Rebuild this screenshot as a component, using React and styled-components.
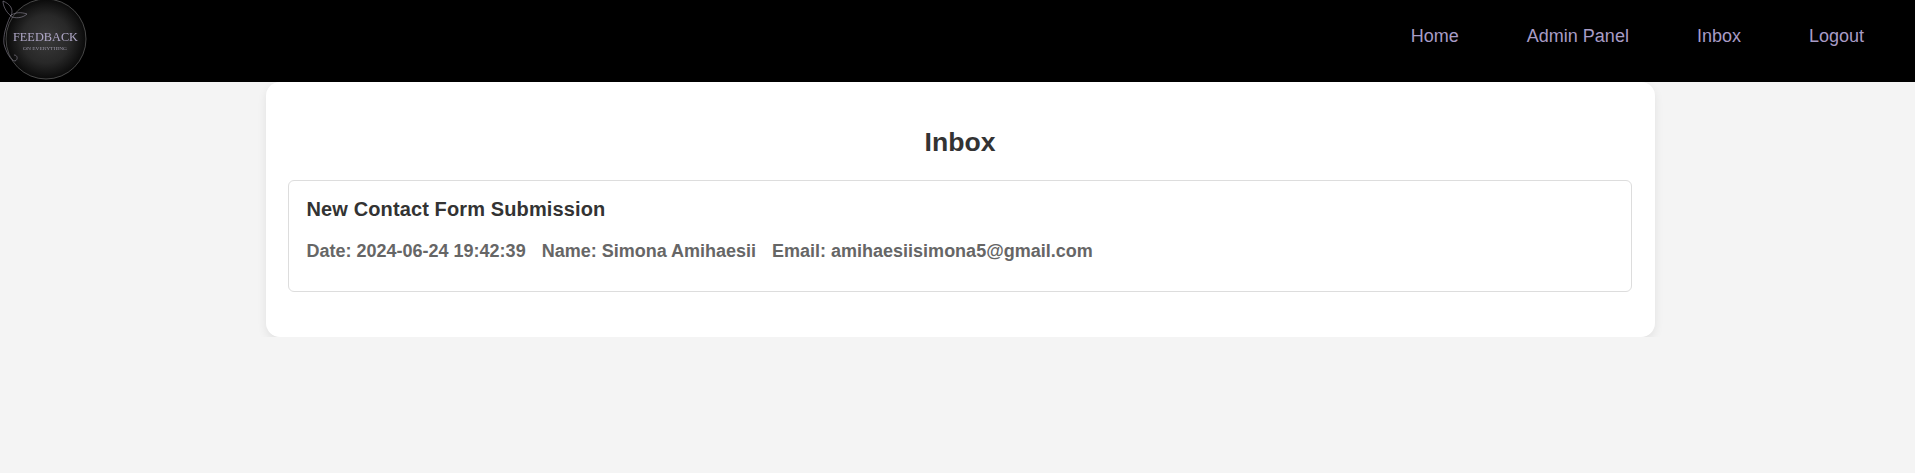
import React from 'react';
import styled, { createGlobalStyle } from 'styled-components';

const GlobalStyle = createGlobalStyle`
  html, body {
    margin: 0;
    padding: 0;
    background: #f4f4f4;
    font-family: "Liberation Sans", Arial, sans-serif;
  }
`;

const Header = styled.header`
  display: flex;
  justify-content: space-between;
  align-items: center;
  height: 82px;
  background: #000;
  overflow: hidden;
`;

const LogoMark = styled.svg`
  display: block;
  width: 90px;
  height: 82px;
  filter: blur(0.3px);
`;

const Nav = styled.nav`
  display: flex;
  gap: 68px;
  padding: 0 51px 9px 0;
`;

const NavLink = styled.a`
  color: #a89cc6;
  font-size: 18px;
  text-decoration: none;
`;

const Card = styled.main`
  box-sizing: border-box;
  width: 1389px;
  margin: 0 0 0 266px;
  padding: 23px 23px 45px 22px;
  background: #fff;
  border-radius: 14px;
  box-shadow: 0 4px 10px rgba(0, 0, 0, 0.08);
`;

const Title = styled.h1`
  margin: 21px 0 22px;
  color: #333;
  font-size: 26.6px;
  line-height: 32px;
  text-align: center;
`;

const Message = styled.article`
  box-sizing: border-box;
  height: 112px;
  padding: 17px 17px 17px 17.5px;
  border: 1px solid #ddd;
  border-radius: 6px;
`;

const Subject = styled.h2`
  margin: 0 0 21px;
  color: #333;
  font-size: 20px;
  line-height: 22px;
  letter-spacing: 0.12px;
`;

const Meta = styled.p`
  display: flex;
  gap: 16px;
  margin: 0;
  color: #666;
  font-size: 18px;
  font-weight: bold;
  line-height: 20px;
`;

const Logo = () => (
  <LogoMark viewBox="0 0 90 82">
    <defs>
      <radialGradient id="disc" cx="50%" cy="50%" r="50%">
        <stop offset="0%" stopColor="#3a3a3a" />
        <stop offset="60%" stopColor="#282828" />
        <stop offset="100%" stopColor="#0a0a0a" />
      </radialGradient>
    </defs>
    <circle cx="46" cy="39" r="40" fill="url(#disc)" stroke="#8a8a8a" strokeWidth="0.5" />
    <g fill="none" stroke="#8f8a98" strokeWidth="0.6">
      <path d="M3 1 C10 4 14 9 11 16 C6 12 3 6 3 1 Z" />
      <path d="M10 16 C15 12 21 12 27 14 C23 18 15 19 10 16 Z" />
      <path d="M10 17 C6 26 3 36 4 44 C6 52 11 61 15 61 C18 60 18 55 14 55" />
    </g>
    <text x="45.5" y="41" fill="#b0a8c8" fontFamily="Liberation Serif" fontSize="13.5" textAnchor="middle" textLength="65" lengthAdjust="spacingAndGlyphs">FEEDBACK</text>
    <text x="45" y="50" fill="#9a96a6" fontFamily="Liberation Serif" fontSize="5" textAnchor="middle" textLength="44" lengthAdjust="spacingAndGlyphs">ON EVERYTHING</text>
  </LogoMark>
);

const App = () => (
  <>
    <GlobalStyle />
    <Header>
      <Logo />
      <Nav>
        <NavLink href="#">Home</NavLink>
        <NavLink href="#">Admin Panel</NavLink>
        <NavLink href="#">Inbox</NavLink>
        <NavLink href="#">Logout</NavLink>
      </Nav>
    </Header>
    <Card>
      <Title>Inbox</Title>
      <Message>
        <Subject>New Contact Form Submission</Subject>
        <Meta>
          <span>Date: 2024-06-24 19:42:39</span>
          <span>Name: Simona Amihaesii</span>
          <span>Email: amihaesiisimona5@gmail.com</span>
        </Meta>
      </Message>
    </Card>
  </>
);

export default App;
